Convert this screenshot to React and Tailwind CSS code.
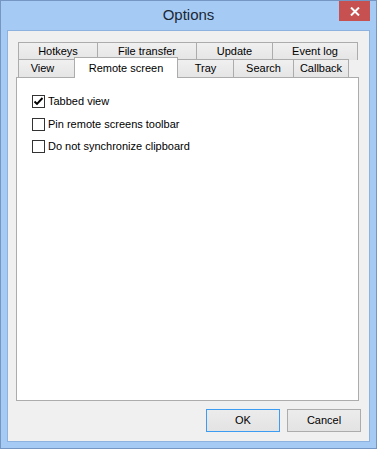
import React from 'react';

const font = { fontFamily: '"Liberation Sans", Arial, sans-serif' };

const topTabs = [
  { label: 'Hotkeys', cls: 'w-[80px] border-l' },
  { label: 'File transfer', cls: 'w-[99px]' },
  { label: 'Update', cls: 'w-[76px]' },
  { label: 'Event log', cls: 'w-[85px]' },
];

const options = [
  { label: 'Tabbed view', checked: true, cls: 'mt-[17px]' },
  { label: 'Pin remote screens toolbar', checked: false, cls: 'mt-[10px]' },
  { label: 'Do not synchronize clipboard', checked: false, cls: 'mt-[9px]' },
];

const Tab = ({ label, className }) => (
  <div
    className={`h-[18px] flex items-center justify-center border-t border-r border-[#acacac] bg-gradient-to-b from-[#f0f0f0] to-[#e5e5e5] text-[11px] text-black ${className}`}
  >
    {label}
  </div>
);

const CheckBox = ({ checked }) => (
  <div className="w-[13px] h-[13px] border border-[#333333] bg-white flex items-center justify-center">
    {checked && (
      <svg width="11" height="11" viewBox="0 0 11 11">
        <path d="M1.5 5.5 L4 8 L9.5 2" fill="none" stroke="#000" strokeWidth="1.9" />
      </svg>
    )}
  </div>
);

const Button = ({ label, focused }) => (
  <button
    className={`w-[74px] h-[23px] border text-[11px] text-black bg-gradient-to-b from-[#ececec] to-[#e3e3e3] ${
      focused ? 'border-[#3c9cf2]' : 'border-[#acacac]'
    }`}
  >
    {label}
  </button>
);

export default function App() {
  return (
    <div
      className="relative w-[377px] h-[449px] border border-[#7596c2] bg-[#a5cbf4] flex flex-col px-[6px]"
      style={font}
    >
      {/* title bar */}
      <div className="h-[29px] flex items-center justify-center shrink-0">
        <span className="text-[15px] text-[#1b2636]">Options</span>
      </div>
      <div className="absolute top-0 right-[6px] w-[31px] h-[20px] bg-[#c75050] flex items-center justify-center">
        <svg width="10" height="9" viewBox="0 0 10 9">
          <path d="M1 0.5 L9 8.5 M9 0.5 L1 8.5" stroke="#fff" strokeWidth="2" />
        </svg>
      </div>

      {/* client area */}
      <div className="w-[363px] h-[412px] border border-[#8db2e0] bg-[#f0f0f0] px-[8px] pt-[11px] flex flex-col">
        <div className="ml-[2px] flex flex-col">
          <div className="flex h-[17px] items-start">
            {topTabs.map((t) => (
              <Tab key={t.label} label={t.label} className={t.cls} />
            ))}
          </div>
          <div className="flex h-[18px] items-end">
            <Tab label="View" className="w-[56px] border-l border-r-0 pr-[8px]" />
            <div className="relative z-10 w-[104px] h-[21px] -mb-px border-l border-t border-r border-[#acacac] bg-white flex items-start justify-center pt-[2px] text-[11px] text-black">
              Remote screen
            </div>
            <Tab label="Tray" className="w-[56px]" />
            <Tab label="Search" className="w-[60px]" />
            <Tab label="Callback" className="w-[55px]" />
          </div>
        </div>

        <div className="w-[343px] h-[324px] border border-[#acacac] bg-white flex flex-col pl-[15px]">
          {options.map((o) => (
            <div key={o.label} className={`flex items-center gap-[3px] h-[13px] ${o.cls}`}>
              <CheckBox checked={o.checked} />
              <span className="text-[11px] text-black">{o.label}</span>
            </div>
          ))}
        </div>

        <div className="flex justify-end gap-[7px] mt-[8px] w-[345px]">
          <Button label="OK" focused />
          <Button label="Cancel" />
        </div>
      </div>
    </div>
  );
}
